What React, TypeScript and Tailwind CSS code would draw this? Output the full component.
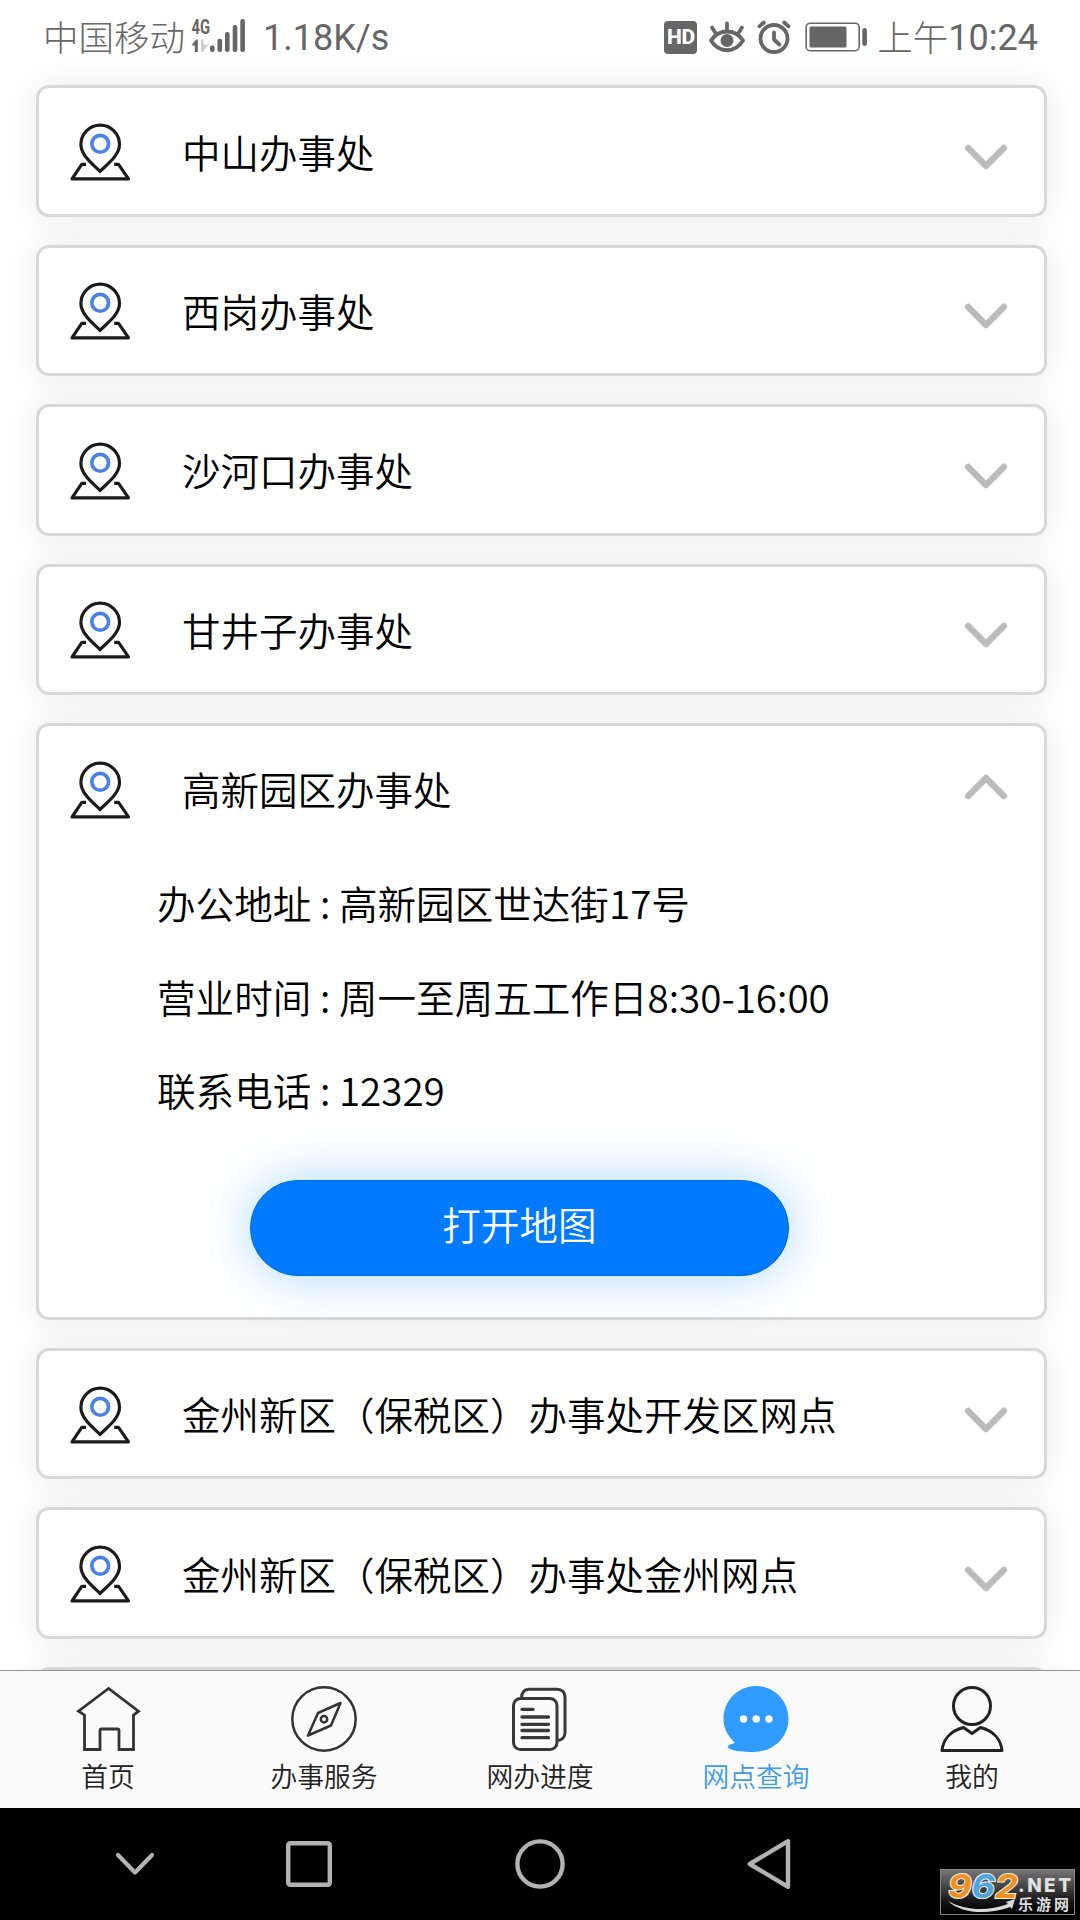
import { useState } from "react";

const offices = [
  { name: "中山办事处" },
  { name: "西岗办事处" },
  { name: "沙河口办事处" },
  { name: "甘井子办事处" },
  {
    name: "高新园区办事处",
    info: [
      { label: "办公地址", value: "高新园区世达街17号" },
      { label: "营业时间", value: "周一至周五工作日8:30-16:00" },
      { label: "联系电话", value: "12329" },
    ],
  },
  { name: "金州新区（保税区）办事处开发区网点" },
  { name: "金州新区（保税区）办事处金州网点" },
  { name: "旅顺口办事处" },
];

const PinIcon = () => (
  <svg width="64" height="60" viewBox="0 0 64 60" fill="none" className="mt-[2px] shrink-0">
    <path
      d="M32 49.500C26.500 43.500 12.900 34 12.900 22.500a19.300 19.300 0 0 1 38.600 0C51.500 34 37.500 43.500 32 49.500Z"
      stroke="#1c1a1b"
      strokeWidth="3.200"
      strokeLinejoin="round"
    />
    <circle cx="32.200" cy="21.800" r="8.400" stroke="#4a82e8" strokeWidth="3.600" />
    <path
      d="M18 42.300h-4.200L4 56.800h56.500L50.500 42.300h-4.300"
      stroke="#1c1a1b"
      strokeWidth="3.200"
      strokeLinejoin="round"
    />
  </svg>
);

const Arrow = ({ open }: { open: boolean }) => (
  <svg
    width="44"
    height="28"
    viewBox="0 0 44 28"
    fill="none"
    stroke="#bbbbbb"
    strokeWidth="6.500"
    strokeLinecap="round"
    strokeLinejoin="round"
    className={open ? "mb-1 rotate-180" : "mt-[12px]"}
  >
    <path d="M4.200 5 22 23 39.800 5" />
  </svg>
);

const StatusBar = () => (
  <div className="flex h-[50px] shrink-0 items-start pl-[43px] pr-[42px] text-[36px] leading-[54px] text-[#666666]">
    <div className="flex h-[74px] items-center">
      <span className="-mt-[2px] text-[35.500px] font-light">中国移动</span>
      <svg width="56" height="40" viewBox="0 0 56 40" className="ml-[5px]" fill="#666666">
        <text
          x="1.500"
          y="17"
          fontSize="21"
          fontWeight="700"
          fontFamily="Roboto, sans-serif"
          textLength="18.500"
          lengthAdjust="spacingAndGlyphs"
        >
          4G
        </text>
        <path d="M1.500 28.500 6 22.500h1.800V35H4.800v-6.500Z" />
        <path d="M11 22.500h2.600v5H18L13.300 35H11Z" fill="#cccccc" />
        <rect x="20" y="28.500" width="4.600" height="6.500" rx="2" />
        <rect x="27.500" y="21.700" width="4.600" height="13.300" rx="2" />
        <rect x="35" y="15" width="4.600" height="20" rx="2" />
        <rect x="42.700" y="8" width="4.600" height="27" rx="2" />
        <rect x="50.300" y="2" width="4.600" height="33" rx="2" />
      </svg>
      <span className="ml-[17px] mt-[2px] font-[Roboto] font-normal">1.18K/s</span>
    </div>
    <div className="ml-auto flex h-[74px] items-center">
      <div className="flex h-[33px] w-[33px] items-center justify-center rounded-[4px] bg-[#666666] font-[Roboto] text-[21px] font-extrabold leading-none tracking-[-0.5px] text-white">
        HD
      </div>
      <svg width="36" height="34" viewBox="0 0 36 34" className="ml-[12px]" fill="none" stroke="#666666" strokeWidth="3.800" strokeLinecap="round">
        <path d="M2 20.500C10 8.500 26 8.500 34 20.500 26 33.500 10 33.500 2 20.500Z" strokeLinejoin="round" />
        <circle cx="18" cy="20.500" r="6.500" fill="#666666" stroke="none" />
        <path d="M18 3.500v6M3 7.500l3.200 5M33 7.500l-3.200 5" />
      </svg>
      <svg width="34" height="34" viewBox="0 0 34 34" className="ml-[12px]" fill="none" stroke="#666666" strokeWidth="3.800" strokeLinecap="round">
        <circle cx="17" cy="18.500" r="13.500" />
        <path d="M17 12.500v7l5.300 5M2.500 6.300 6.800 2.500M31.500 6.300 27.200 2.500" strokeLinejoin="round" />
      </svg>
      <svg width="64" height="30" viewBox="0 0 64 30" className="ml-[14px]">
        <rect x="1.200" y="1.200" width="53" height="27.500" rx="4" fill="none" stroke="#666666" strokeWidth="1.600" />
        <rect x="4.500" y="4.500" width="37" height="21" rx="1.500" fill="#666666" />
        <rect x="57.300" y="6" width="4.600" height="18" rx="2.200" fill="#666666" />
      </svg>
      <span className="-mt-[2px] ml-[8px] text-[35.500px] font-light">上午</span>
      <span className="mt-[2px] font-[Roboto] font-normal">10:24</span>
    </div>
  </div>
);

const HomeIcon = () => (
  <svg width="66" height="66" viewBox="0 0 66 66" fill="none" stroke="#333333" strokeWidth="2.800">
    <path d="M33.500 2.500 3.500 25.200l6 4v34.300H25V44.500a1.500 1.500 0 0 1 1.500-1.500h16a1.500 1.500 0 0 1 1.500 1.500v19h14.500V29.200l5-4Z" />
  </svg>
);

const CompassIcon = () => (
  <svg width="66" height="66" viewBox="0 0 66 66" fill="none" stroke="#333333" strokeWidth="2.500">
    <circle cx="33" cy="33" r="31.700" />
    <path d="M49.500 17 27 27 17 49.500 40 39.500Z" strokeLinejoin="round" />
    <circle cx="33" cy="33.200" r="3.200" />
  </svg>
);

const DocIcon = () => (
  <svg width="66" height="66" viewBox="0 0 66 66" fill="none" stroke="#383838" strokeWidth="3">
    <rect x="6.500" y="12.500" width="43.500" height="51" rx="7" />
    <path d="M14.500 12.500c0-6 2.500-9.300 7.500-9.300h28c5 0 8 3 8 8v35c0 5-3 8.300-8 8.300" />
    <path d="M15 23.300h11M15 31h26.500M15 38.300h26.500M15 44.500h26.500M15 51.700h26.500" strokeWidth="3.300" strokeLinecap="round" />
  </svg>
);

const ChatIcon = () => (
  <svg width="66" height="66" viewBox="0 0 66 66">
    <path
      d="M33 0C51 0 65.500 14.500 65.500 33 65.500 51.500 50 66 31 66c-12 0-24-1.500-26-4.500-1-2.500 3-3.500 7-4.500C5 50 .5 42.500.5 33 .5 14.500 15 0 33 0Z"
      fill="#309bff"
    />
    <g fill="#ffffff">
      <circle cx="20.500" cy="33" r="3.700" />
      <circle cx="33.200" cy="33" r="3.700" />
      <circle cx="46" cy="33" r="3.700" />
    </g>
  </svg>
);

const UserIcon = () => (
  <svg width="66" height="66" viewBox="0 0 66 66" fill="none" stroke="#222222" strokeWidth="3" strokeLinejoin="round">
    <circle cx="33" cy="20" r="18.500" />
    <path d="M3 64.500C4 54 11 45 24.500 41.500L33 47.500 41.500 41.500C55 45 62 54 63 64.500Z" />
  </svg>
);

const tabs = [
  { title: "首页", icon: <HomeIcon /> },
  { title: "办事服务", icon: <CompassIcon /> },
  { title: "网办进度", icon: <DocIcon /> },
  { title: "网点查询", icon: <ChatIcon />, active: true },
  { title: "我的", icon: <UserIcon /> },
];

const Watermark = () => (
  <svg width="135" height="46" viewBox="0 0 135 46" className="absolute bottom-[5px] right-[5px] z-20">
    <defs>
      <linearGradient id="plate" x1="0" y1="0" x2="0" y2="1">
        <stop offset="0" stopColor="#777777" />
        <stop offset="0.750" stopColor="#111111" />
        <stop offset="1" stopColor="#000000" />
      </linearGradient>
    </defs>
    <rect x="0.500" y="0.500" width="134" height="45" fill="url(#plate)" stroke="#888888" />
    <text
      x="8"
      y="28.500"
      fontFamily="Inter, sans-serif"
      fontSize="33"
      fontWeight="700"
      fontStyle="italic"
      stroke="#f4f1ea"
      strokeWidth="2"
      paintOrder="stroke"
      textLength="70"
      lengthAdjust="spacingAndGlyphs"
    >
      <tspan fill="#f0901e">9</tspan>
      <tspan fill="#4fa5de">6</tspan>
      <tspan fill="#f0901e">2</tspan>
    </text>
    <path d="M8 32C24 41 46 43 68 35l-2-2 9-3-3 10-2-2C48 46 22 45 8 32Z" fill="#d9d9d9" />
    <text x="78" y="23" fontFamily="Inter, sans-serif" fontSize="19" fontWeight="800" fill="#e2e2e2" textLength="53">
      .NET
    </text>
    <text x="78" y="40.500" fontFamily="'Noto Sans CJK SC', sans-serif" fontSize="15" fontWeight="700" fill="#dddddd" textLength="51">
      乐游网
    </text>
  </svg>
);

const App = () => {
  const [openIndex, setOpenIndex] = useState(4);

  return (
    <div className="relative flex h-[1920px] w-[1080px] flex-col overflow-hidden bg-white font-['Noto_Sans_CJK_SC',sans-serif] text-black">
      <StatusBar />

      {/* Office list */}
      <ul className="flex min-h-0 flex-1 flex-col gap-[28px] overflow-hidden pl-[36px] pr-[33px] pt-[35.4px]">
        {offices.map((item, key) => {
          const open = key === openIndex && !!item.info;
          return (
            <li
              key={key}
              className="shrink-0 rounded-[13px] border-3 border-[#d8d8d8] bg-white shadow-[0_0_36px_rgba(0,0,0,0.09)]"
            >
              <button
                className="flex h-[125.4px] w-full cursor-pointer items-center pl-[29px] pr-[36px] text-left"
                onClick={() => setOpenIndex(open ? -1 : key)}
              >
                <PinIcon />
                <span className="ml-[50px] mt-[1px] flex-1 text-[38.500px] font-[350]">{item.name}</span>
                <Arrow open={open} />
              </button>
              {open && (
                <div className="h-[465.5px] pl-[118px] pt-[5px] text-[38.600px] font-[350]">
                  {item.info!.map((row) => (
                    <p key={row.label} className="h-[93.4px] leading-[92.8px]">
                      {row.label} : {row.value}
                    </p>
                  ))}
                  <button className="ml-[93px] mt-[43px] flex h-[96px] w-[539px] cursor-pointer items-center justify-center rounded-full border border-[#0068d9] bg-[#007aff] pb-[7px] text-white shadow-[0_0_50px_rgba(40,150,240,0.38)]">
                    打开地图
                  </button>
                </div>
              )}
            </li>
          );
        })}
      </ul>

      {/* Tab bar */}
      <div className="z-10 flex h-[138px] shrink-0 border-t border-[#909090] bg-[#fafafa]">
        {tabs.map((tab) => (
          <div
            key={tab.title}
            className={`flex flex-1 flex-col items-center pt-[15px] text-[26.800px] font-[350] ${
              tab.active ? "text-[#3f9be8]" : "text-[#222222]"
            }`}
          >
            {tab.icon}
            <span className="mt-[4px] leading-[40px]">{tab.title}</span>
          </div>
        ))}
      </div>

      {/* System navigation */}
      <div className="z-10 flex h-[112px] shrink-0 items-center bg-black pl-[115px]">
        <svg width="40" height="24" viewBox="0 0 40 24" fill="none" stroke="#b3b3b3" strokeWidth="4.200" strokeLinecap="round" strokeLinejoin="round">
          <path d="M3 3 20 20.500 37 3" />
        </svg>
        <svg width="46" height="46" viewBox="0 0 46 46" className="ml-[131px]" fill="none" stroke="#b3b3b3" strokeWidth="4.400">
          <rect x="2.200" y="2.200" width="41.600" height="41.600" rx="2" />
        </svg>
        <svg width="50" height="50" viewBox="0 0 50 50" className="ml-[183px]" fill="none" stroke="#b3b3b3" strokeWidth="4.400">
          <circle cx="25" cy="25" r="22.600" />
        </svg>
        <svg width="44" height="52" viewBox="0 0 44 52" className="ml-[182px]" fill="none" stroke="#b3b3b3" strokeWidth="4.400" strokeLinejoin="round">
          <path d="M41 3.200v45.600L2.800 26Z" />
        </svg>
      </div>

      <Watermark />
    </div>
  );
};

export default App;
